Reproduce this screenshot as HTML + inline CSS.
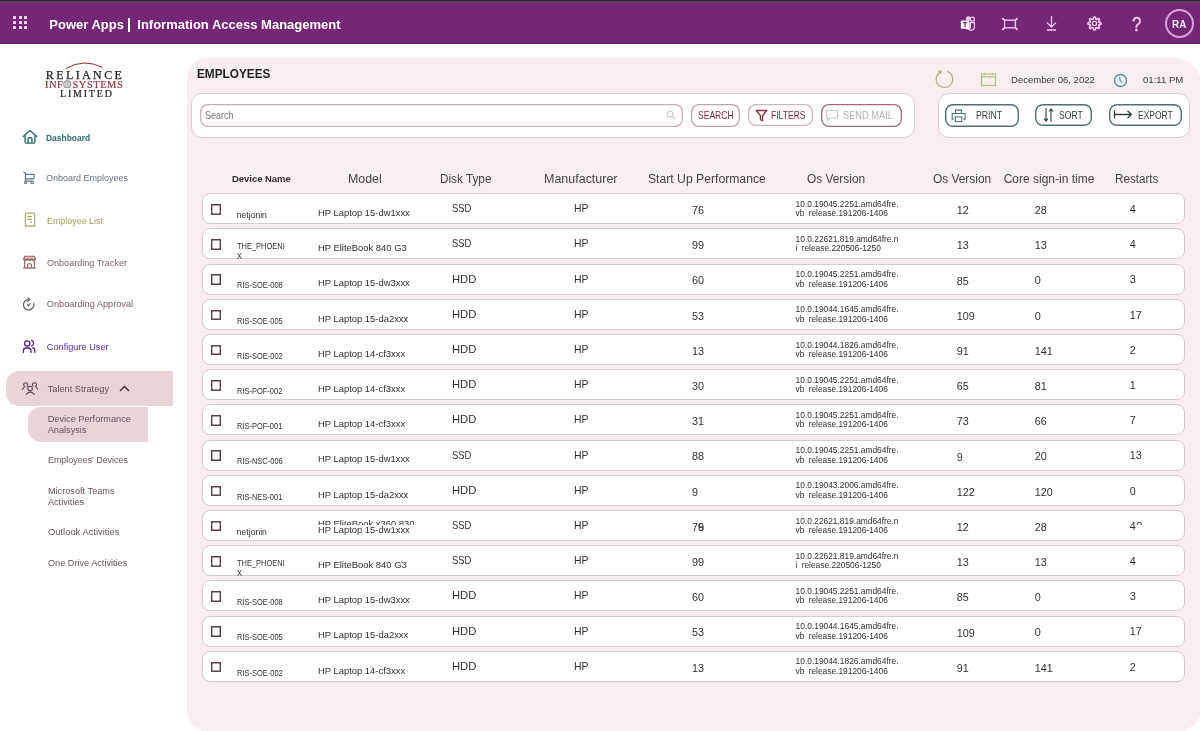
<!DOCTYPE html>
<html><head><meta charset="utf-8">
<style>
*{box-sizing:border-box;margin:0;padding:0}
html,body{width:1200px;height:731px;overflow:hidden;background:#fff}
body{position:relative;font-family:"Liberation Sans",sans-serif;color:#333}
.a{position:absolute;white-space:nowrap;line-height:1}
.s{position:absolute;overflow:visible}
</style></head><body><div style="position:absolute;left:0;top:0;width:1200px;height:731px;overflow:hidden;will-change:transform">
<div class="a" style="left:0;top:0;width:1200px;height:44px;background:linear-gradient(#2c2a30 0,#2c2a30 1.2px,#66486a 1.6px,#6a4a6c 3px,#742774 3.6px,#742774 42.6px,#5c2260 43.2px,#5c2260 43.8px,#fdf2fd 44px)"></div><div class="a" style="left:13.2px;top:16.2px;width:3px;height:3px;background:#f4d6f4;border-radius:0.6px"></div><div class="a" style="left:18.5px;top:16.2px;width:3px;height:3px;background:#f4d6f4;border-radius:0.6px"></div><div class="a" style="left:23.8px;top:16.2px;width:3px;height:3px;background:#f4d6f4;border-radius:0.6px"></div><div class="a" style="left:13.2px;top:21.3px;width:3px;height:3px;background:#f4d6f4;border-radius:0.6px"></div><div class="a" style="left:18.5px;top:21.3px;width:3px;height:3px;background:#f4d6f4;border-radius:0.6px"></div><div class="a" style="left:23.8px;top:21.3px;width:3px;height:3px;background:#f4d6f4;border-radius:0.6px"></div><div class="a" style="left:13.2px;top:26.4px;width:3px;height:3px;background:#f4d6f4;border-radius:0.6px"></div><div class="a" style="left:18.5px;top:26.4px;width:3px;height:3px;background:#f4d6f4;border-radius:0.6px"></div><div class="a" style="left:23.8px;top:26.4px;width:3px;height:3px;background:#f4d6f4;border-radius:0.6px"></div><div class="a" style="left:49.30px;top:17.80px;font-size:13px;color:#fff;font-weight:bold;">Power Apps</div>
<div class="a" style="left:128.2px;top:17.5px;width:1.5px;height:14.5px;background:#fff"></div><div class="a" style="left:137.30px;top:17.80px;font-size:13px;color:#fff;font-weight:bold;">Information Access Management</div>
<svg class="s" style="left:958.5px;top:14.8px" width="18.5" height="16.6" viewBox="0 0 20 18">
<circle cx="14.5" cy="4.5" r="2.2" fill="none" stroke="#efc8ef" stroke-width="1.3"/>
<path d="M9.5 8.2h7.2v4.6a3.6 3.6 0 0 1-7.2 0z" fill="none" stroke="#efc8ef" stroke-width="1.3"/>
<circle cx="10" cy="4" r="2.6" fill="#efc8ef"/>
<path d="M7 7.5h6v5.5a3 3 0 0 1-6 0z" fill="#efc8ef"/>
<rect x="2" y="6" width="9" height="9" rx="0.8" fill="#fff"/>
<path d="M4.3 8.2h4.4M6.5 8.2v5" stroke="#742774" stroke-width="1.3"/>
</svg><svg class="s" style="left:1001px;top:16.5px" width="18" height="14" viewBox="0 0 18 14">
<rect x="3.6" y="3.2" width="10.8" height="7.6" fill="none" stroke="#efc8ef" stroke-width="1.4"/>
<path d="M1.8 1.6l1.8 1.6M16.2 1.6l-1.8 1.6M1.8 12.4l1.8-1.6M16.2 12.4l-1.8-1.6" stroke="#efc8ef" stroke-width="1.8" stroke-linecap="round"/>
</svg><svg class="s" style="left:1045px;top:15px" width="13" height="16" viewBox="0 0 13 16">
<path d="M6.5 1v11M2 7.5l4.5 4.5 4.5-4.5M2 15h9" fill="none" stroke="#efc8ef" stroke-width="1.3"/>
</svg><svg class="s" style="left:1086.2px;top:14.7px" width="17" height="17" viewBox="0 0 17 17"><path d="M15.00 8.50 L14.98 8.75 L14.90 9.00 L14.72 9.24 L14.39 9.43 L13.89 9.57 L13.40 9.68 L13.06 9.79 L12.86 9.92 L12.74 10.06 L12.66 10.22 L12.60 10.39 L12.58 10.58 L12.63 10.81 L12.80 11.13 L13.07 11.56 L13.32 12.00 L13.42 12.38 L13.38 12.67 L13.26 12.90 L13.10 13.10 L12.90 13.26 L12.67 13.38 L12.38 13.42 L12.00 13.32 L11.56 13.07 L11.13 12.80 L10.81 12.63 L10.58 12.58 L10.39 12.60 L10.22 12.66 L10.06 12.74 L9.92 12.86 L9.79 13.06 L9.68 13.40 L9.57 13.89 L9.43 14.39 L9.24 14.72 L9.00 14.90 L8.75 14.98 L8.50 15.00 L8.25 14.98 L8.00 14.90 L7.76 14.72 L7.57 14.39 L7.43 13.89 L7.32 13.40 L7.21 13.06 L7.08 12.86 L6.94 12.74 L6.78 12.66 L6.61 12.60 L6.42 12.58 L6.19 12.63 L5.87 12.80 L5.44 13.07 L5.00 13.32 L4.62 13.42 L4.33 13.38 L4.10 13.26 L3.90 13.10 L3.74 12.90 L3.62 12.67 L3.58 12.38 L3.68 12.00 L3.93 11.56 L4.20 11.13 L4.37 10.81 L4.42 10.58 L4.40 10.39 L4.34 10.22 L4.26 10.06 L4.14 9.92 L3.94 9.79 L3.60 9.68 L3.11 9.57 L2.61 9.43 L2.28 9.24 L2.10 9.00 L2.02 8.75 L2.00 8.50 L2.02 8.25 L2.10 8.00 L2.28 7.76 L2.61 7.57 L3.11 7.43 L3.60 7.32 L3.94 7.21 L4.14 7.08 L4.26 6.94 L4.34 6.78 L4.40 6.61 L4.42 6.42 L4.37 6.19 L4.20 5.87 L3.93 5.44 L3.68 5.00 L3.58 4.62 L3.62 4.33 L3.74 4.10 L3.90 3.90 L4.10 3.74 L4.33 3.62 L4.62 3.58 L5.00 3.68 L5.44 3.93 L5.87 4.20 L6.19 4.37 L6.42 4.42 L6.61 4.40 L6.78 4.34 L6.94 4.26 L7.08 4.14 L7.21 3.94 L7.32 3.60 L7.43 3.11 L7.57 2.61 L7.76 2.28 L8.00 2.10 L8.25 2.02 L8.50 2.00 L8.75 2.02 L9.00 2.10 L9.24 2.28 L9.43 2.61 L9.57 3.11 L9.68 3.60 L9.79 3.94 L9.92 4.14 L10.06 4.26 L10.22 4.34 L10.39 4.40 L10.58 4.42 L10.81 4.37 L11.13 4.20 L11.56 3.93 L12.00 3.68 L12.38 3.58 L12.67 3.62 L12.90 3.74 L13.10 3.90 L13.26 4.10 L13.38 4.33 L13.42 4.62 L13.32 5.00 L13.07 5.44 L12.80 5.87 L12.63 6.19 L12.58 6.42 L12.60 6.61 L12.66 6.78 L12.74 6.94 L12.86 7.08 L13.06 7.21 L13.40 7.32 L13.89 7.43 L14.39 7.57 L14.72 7.76 L14.90 8.00 L14.98 8.25Z" fill="none" stroke="#efc8ef" stroke-width="1.7" stroke-linejoin="round"/><circle cx="8.5" cy="8.5" r="2.1" fill="none" stroke="#efc8ef" stroke-width="1.4"/></svg><div class="a" style="left:1131.50px;top:13.85px;font-size:20.5px;color:#efc8ef;font-weight:normal;transform:scaleX(0.82);transform-origin:0 0;-webkit-text-stroke:0.4px #efc8ef;">?</div>
<div class="a" style="left:1164.5px;top:9.3px;width:29px;height:29px;border:2.1px solid #d9a2dc;border-radius:50%"></div><div class="a" style="left:1171.80px;top:19.36px;font-size:10.8px;color:#f6e8f6;font-weight:bold;transform:scaleX(0.92);transform-origin:0 0;">RA</div>
<svg class="s" style="left:64px;top:59px" width="42" height="12" viewBox="0 0 42 12"><path d="M2 9.5Q20 -1 38.5 8.5" fill="none" stroke="#8f2a35" stroke-width="1"/></svg><div class="a" style="left:45.80px;top:68.84px;font-size:12px;color:#1e1e1e;font-weight:normal;font-family:'Liberation Serif',serif;letter-spacing:2.4px;-webkit-text-stroke:0.25px #1e1e1e;">RELIANCE</div>
<div class="a" style="left:45.00px;top:79.81px;font-size:10.5px;color:#8e3442;font-weight:normal;font-family:'Liberation Serif',serif;letter-spacing:0.5px;-webkit-text-stroke:0.2px #8e3442;">INF<svg style="display:inline-block;vertical-align:-0.5px;margin:0 0.5px 0 0" width="8.6" height="8.6" viewBox="0 0 10 10"><circle cx="5" cy="5" r="4.4" fill="#fff" stroke="#666" stroke-width="0.9"/><path d="M5 0.7v8.6M0.7 5h8.6M1.6 3h6.8M1.6 7h6.8" stroke="#888" stroke-width="0.5"/><ellipse cx="5" cy="5" rx="2.1" ry="4.3" fill="none" stroke="#888" stroke-width="0.5"/></svg>SYSTEMS</div>
<div class="a" style="left:60.00px;top:88.94px;font-size:10px;color:#1e1e1e;font-weight:normal;font-family:'Liberation Serif',serif;letter-spacing:1.8px;-webkit-text-stroke:0.2px #1e1e1e;">LIMITED</div>
<svg class="s" style="left:18px;top:125px" width="24" height="24" viewBox="0 0 24 24">
<path d="M5.3 11.5L12 5.4l6.7 6.1M7.1 10.1v6.7a1.3 1.3 0 0 0 1.3 1.3h7.2a1.3 1.3 0 0 0 1.3-1.3v-6.7" fill="none" stroke="#2a6b6a" stroke-width="1.4" stroke-linejoin="round" stroke-linecap="round"/>
<path d="M10.1 18v-4.3a0.9 0.9 0 0 1 0.9-0.9h2a0.9 0.9 0 0 1 0.9 0.9v4.3" fill="none" stroke="#2a6b6a" stroke-width="1.4"/>
</svg><div class="a" style="left:46.00px;top:134.20px;font-size:9.1px;color:#276f6d;font-weight:bold;transform:scaleX(0.93);transform-origin:0 0;">Dashboard</div>
<svg class="s" style="left:18px;top:165px" width="24" height="25" viewBox="0 0 24 25">
<path d="M5.9 7.2l1.5 1.1V16h7.2M7.4 9.3h8.6v4.5H7.4" fill="none" stroke="#6b7780" stroke-width="1.25" stroke-linejoin="round" stroke-linecap="round"/>
<circle cx="7.5" cy="17.6" r="1.15" fill="none" stroke="#6b7780" stroke-width="1.1"/><ellipse cx="14.2" cy="17.6" rx="1.5" ry="1.1" fill="none" stroke="#6b7780" stroke-width="1.1"/>
</svg><div class="a" style="left:46.00px;top:174.41px;font-size:9.2px;color:#67727b;font-weight:normal;transform:scaleX(0.98);transform-origin:0 0;">Onboard Employees</div>
<svg class="s" style="left:18px;top:208px" width="24" height="24" viewBox="0 0 24 24">
<path d="M7.3 18.4V6.5a1.3 1.3 0 0 1 1.3-1.3h6.8a1.3 1.3 0 0 1 1.3 1.3v11.9l-1.5-0.9-1.5 0.9-1.5-0.9-1.5 0.9-1.5-0.9z" fill="none" stroke="#b2b072" stroke-width="1.2" stroke-linejoin="round"/>
<path d="M9.4 8.6h4.4M9.4 11.4h4.4M12.1 14.3h1.7" stroke="#a9a568" stroke-width="1.15"/>
</svg><div class="a" style="left:46.80px;top:217.01px;font-size:9.2px;color:#a19e60;font-weight:normal;transform:scaleX(0.97);transform-origin:0 0;">Employee List</div>
<svg class="s" style="left:18px;top:250px" width="24" height="24" viewBox="0 0 24 24">
<path d="M6.6 6.2h9.8l1 3H5.6z" fill="#ebc3bf" stroke="#8e6260" stroke-width="1.1" stroke-linejoin="round"/>
<path d="M5.6 9.2q1.95 2.6 3.9 0q1.95 2.6 3.9 0q1.95 2.6 3.9 0" fill="none" stroke="#8e6260" stroke-width="1.1"/>
<path d="M6.7 10.6v7.2M16.3 10.6v7.2M9.6 17.8v-3.1a1 1 0 0 1 1-1h1.8a1 1 0 0 1 1 1v3.1" fill="none" stroke="#8e6260" stroke-width="1.15"/>
<path d="M5.2 18h12.6" stroke="#8e6260" stroke-width="1.3"/>
</svg><div class="a" style="left:46.80px;top:259.01px;font-size:9.2px;color:#7c5f61;font-weight:normal;transform:scaleX(0.985);transform-origin:0 0;">Onboarding Tracker</div>
<svg class="s" style="left:18px;top:292px" width="24" height="24" viewBox="0 0 24 24">
<path d="M10.3 7.6A5.2 5.2 0 1 0 15.7 11.6" fill="none" stroke="#6a5a62" stroke-width="1.2" stroke-linecap="round"/>
<path d="M10 5.9l1.8 1.7-1.8 1.7" fill="none" stroke="#6a5a62" stroke-width="1.2" stroke-linecap="round" stroke-linejoin="round"/>
<path d="M9.3 12.5l1.2 1.1 1.9-2.1" fill="none" stroke="#6a5a62" stroke-width="1.1" stroke-linecap="round" stroke-linejoin="round"/>
</svg><div class="a" style="left:46.80px;top:300.41px;font-size:9.2px;color:#705e67;font-weight:normal;">Onboarding Approval</div>
<svg class="s" style="left:18px;top:334px" width="24" height="24" viewBox="0 0 24 24">
<circle cx="9.2" cy="9.4" r="2.6" fill="none" stroke="#4f2486" stroke-width="1.3"/>
<path d="M5.4 18.4v-1.6a2.8 2.8 0 0 1 2.8-2.8h2a2.8 2.8 0 0 1 2.8 2.8v1.6M13.6 6.5a2.8 2.8 0 0 1 0 5.4M14.5 13.9a2.6 2.6 0 0 1 2.3 2.6v1.9" fill="none" stroke="#4f2486" stroke-width="1.3" stroke-linecap="round"/>
</svg><div class="a" style="left:46.80px;top:343.01px;font-size:9.2px;color:#5b2c98;font-weight:normal;">Configure User</div>
<div class="a" style="left:6px;top:371.3px;width:166.5px;height:34.4px;background:#e8d5d8;border-radius:13px 0 0 13px"></div><svg class="s" style="left:18px;top:376px" width="24" height="24" viewBox="0 0 24 24">
<circle cx="12.1" cy="12.6" r="2.3" fill="none" stroke="#5e4c54" stroke-width="1.1"/>
<path d="M8.3 18.3Q12.2 14 16.2 18.3M9.1 10.2A2 2 0 1 0 6.7 10.5L4.3 13.4M15.1 10.2A2 2 0 1 1 17.5 10.5L19.8 13.2" fill="none" stroke="#5e4c54" stroke-width="1.1" stroke-linecap="round"/>
</svg><div class="a" style="left:47.70px;top:385.21px;font-size:9.2px;color:#615058;font-weight:normal;">Talent Strategy</div>
<svg class="s" style="left:119px;top:385px" width="11" height="7" viewBox="0 0 11 7"><path d="M1 6L5.5 1.5 10 6" fill="none" stroke="#3d3035" stroke-width="1.4"/></svg><div class="a" style="left:27.7px;top:407.2px;width:120.8px;height:34.5px;background:#e8d5d8;border-radius:13px 0 0 13px"></div><div class="a" style="left:47.70px;top:415.21px;font-size:9.2px;color:#66505e;font-weight:normal;">Device Performance</div>
<div class="a" style="left:47.70px;top:425.71px;font-size:9.2px;color:#66505e;font-weight:normal;">Analsysis</div>
<div class="a" style="left:47.90px;top:456.41px;font-size:9.2px;color:#66505e;font-weight:normal;transform:scaleX(0.97);transform-origin:0 0;">Employees’ Devices</div>
<div class="a" style="left:47.90px;top:486.81px;font-size:9.2px;color:#66505e;font-weight:normal;">Microsoft Teams</div>
<div class="a" style="left:47.90px;top:497.71px;font-size:9.2px;color:#66505e;font-weight:normal;">Activities</div>
<div class="a" style="left:47.90px;top:528.31px;font-size:9.2px;color:#66505e;font-weight:normal;transform:scaleX(1.02);transform-origin:0 0;">Outlook Activities</div>
<div class="a" style="left:47.90px;top:558.91px;font-size:9.2px;color:#66505e;font-weight:normal;transform:scaleX(0.995);transform-origin:0 0;">One Drive Activities</div>
<div class="a" style="left:187px;top:58px;width:1015px;height:675px;border-radius:20px 28px 28px 25px;background:#f8eeef"></div><div class="a" style="left:197.00px;top:67.43px;font-size:13.2px;color:#1f1f24;font-weight:bold;transform:scaleX(0.895);transform-origin:0 0;">EMPLOYEES</div>
<div class="a" style="left:191.2px;top:93px;width:724.3px;height:44.5px;background:#fff;border:1px solid #dccdd0;border-radius:11px"></div><div class="a" style="left:199.8px;top:103.5px;width:483px;height:23px;background:#fff;box-shadow:inset 0 0 0 1.25px #c6aeb3;border-radius:8px"></div><div class="a" style="left:205.00px;top:111.20px;font-size:10.4px;color:#7a7a7a;font-weight:normal;transform:scaleX(0.87);transform-origin:0 0;">Search</div>
<svg class="s" style="left:666px;top:110px" width="10" height="10" viewBox="0 0 10 10"><circle cx="4" cy="4" r="2.8" fill="none" stroke="#c8c8c8" stroke-width="1.2"/><path d="M6 6l3 3" stroke="#c8c8c8" stroke-width="1.3"/></svg><div class="a" style="left:691px;top:103.5px;width:49px;height:23px;background:#fff;box-shadow:inset 0 0 0 1.25px #bfa3a8;border-radius:8px"></div><div class="a" style="left:698.00px;top:111.28px;font-size:10.3px;color:#7b2c3c;font-weight:normal;transform:scaleX(0.83);transform-origin:0 0;">SEARCH</div>
<div class="a" style="left:748.3px;top:103.7px;width:65px;height:22.8px;background:#fff;box-shadow:inset 0 0 0 1.25px #d0b6bb;border-radius:8px"></div><svg class="s" style="left:755px;top:109px" width="13" height="13" viewBox="0 0 13 13"><path d="M1.3 1.5h10.4L7.6 6.5v5.3L5.4 10.6V6.5z" fill="none" stroke="#8a3040" stroke-width="1.3" stroke-linejoin="round"/></svg><div class="a" style="left:770.50px;top:111.28px;font-size:10.3px;color:#7b2c3c;font-weight:normal;transform:scaleX(0.83);transform-origin:0 0;">FILTERS</div>
<div class="a" style="left:821.2px;top:103.5px;width:80.6px;height:23px;background:#fff;box-shadow:inset 0 0 0 1.35px #a56a74;border-radius:8px"></div><svg class="s" style="left:825px;top:109px" width="14" height="13" viewBox="0 0 14 13"><path d="M1.5 1.5h11v7.5H5.5L2.5 11.5V9h-1z" fill="none" stroke="#c8c8c8" stroke-width="1.2" stroke-linejoin="round"/></svg><div class="a" style="left:843.30px;top:111.28px;font-size:10.3px;color:#b3b3b3;font-weight:normal;transform:scaleX(0.9);transform-origin:0 0;">SEND MAIL</div>
<svg class="s" style="left:934px;top:69px" width="21" height="21" viewBox="0 0 21 21">
<path d="M7.2 2.6A8.3 8.3 0 1 0 13.2 2.4" fill="none" stroke="#a9b47f" stroke-width="1.15"/>
<path d="M4.2 1.6L7.4 2.6 5.8 5.6" fill="none" stroke="#a9b47f" stroke-width="1.15" stroke-linejoin="round"/>
</svg><svg class="s" style="left:980px;top:72px" width="17" height="15" viewBox="0 0 17 15">
<rect x="1.5" y="2" width="14" height="11.5" fill="none" stroke="#a9c27e" stroke-width="1.15"/>
<path d="M1.5 4.8h14M4.5 1v2.2M12.5 1v2.2" stroke="#a9c27e" stroke-width="1.15"/>
</svg><div class="a" style="left:1011.00px;top:75.39px;font-size:9.7px;color:#383838;font-weight:normal;transform:scaleX(0.985);transform-origin:0 0;">December 06, 2022</div>
<svg class="s" style="left:1113px;top:72.5px" width="15" height="15" viewBox="0 0 15 15">
<circle cx="7.5" cy="7.5" r="6" fill="none" stroke="#4d8bb8" stroke-width="1.4"/>
<path d="M6.6 3.8l0.6 4 2 2" fill="none" stroke="#4d8bb8" stroke-width="1.1"/>
</svg><div class="a" style="left:1142.50px;top:75.39px;font-size:9.7px;color:#383838;font-weight:normal;transform:scaleX(0.99);transform-origin:0 0;">01:11 PM</div>
<div class="a" style="left:937.6px;top:93.2px;width:252.4px;height:44.5px;background:#fff;border:1px solid #dfcdd0;border-radius:11px"></div><div class="a" style="left:945.2px;top:103.5px;width:73.4px;height:23px;background:#fff;box-shadow:inset 0 0 0 1.4px #4f6f71;border-radius:8px"></div><svg class="s" style="left:951px;top:108.6px" width="15.4" height="13.6" viewBox="0 0 17 15">
<path d="M5 5V1.2h6.5V5M3 11.2H1.3V5h14.3v6.2H13.5" fill="none" stroke="#4f6f71" stroke-width="1.2"/>
<rect x="4.8" y="8.7" width="7" height="5.2" fill="none" stroke="#4f6f71" stroke-width="1.2"/>
</svg><div class="a" style="left:975.50px;top:111.05px;font-size:10.1px;color:#2e3d3e;font-weight:normal;transform:scaleX(0.86);transform-origin:0 0;">PRINT</div>
<div class="a" style="left:1035.4px;top:103.7px;width:57px;height:22.8px;background:#fff;box-shadow:inset 0 0 0 1.4px #4f6f71;border-radius:8px"></div><svg class="s" style="left:1043px;top:107px" width="11" height="16" viewBox="0 0 11 16">
<path d="M3 1v13M1 11.5l2 2.5 2-2.5M8 15V2M6 4.5L8 2l2 2.5" fill="none" stroke="#2f3f40" stroke-width="1.1"/>
</svg><div class="a" style="left:1059.00px;top:111.05px;font-size:10.1px;color:#2e3d3e;font-weight:normal;transform:scaleX(0.85);transform-origin:0 0;">SORT</div>
<div class="a" style="left:1109px;top:103.7px;width:72.8px;height:22.8px;background:#fff;box-shadow:inset 0 0 0 1.4px #4f6f71;border-radius:8px"></div><svg class="s" style="left:1113px;top:109px" width="20" height="11" viewBox="0 0 20 11">
<path d="M1.5 1.5v8M1.5 5.5h17M14.5 1.8l3.9 3.7-3.9 3.7" fill="none" stroke="#2f3f40" stroke-width="1.3"/>
</svg><div class="a" style="left:1137.60px;top:111.05px;font-size:10.1px;color:#2e3d3e;font-weight:normal;transform:scaleX(0.84);transform-origin:0 0;">EXPORT</div>
<div class="a" style="left:232.00px;top:173.82px;font-size:9.9px;color:#2e2e2e;font-weight:bold;transform:scaleX(0.955);transform-origin:0 0;">Device Name</div>
<div class="a" style="left:348.30px;top:173.14px;font-size:12px;color:#444444;font-weight:normal;transform:scaleX(1.03);transform-origin:0 0;">Model</div>
<div class="a" style="left:439.70px;top:173.14px;font-size:12px;color:#444444;font-weight:normal;transform:scaleX(0.98);transform-origin:0 0;">Disk Type</div>
<div class="a" style="left:543.50px;top:173.14px;font-size:12px;color:#444444;font-weight:normal;transform:scaleX(1.04);transform-origin:0 0;">Manufacturer</div>
<div class="a" style="left:647.70px;top:173.14px;font-size:12px;color:#444444;font-weight:normal;transform:scaleX(1.015);transform-origin:0 0;">Start Up Performance</div>
<div class="a" style="left:806.70px;top:173.14px;font-size:12px;color:#444444;font-weight:normal;transform:scaleX(0.99);transform-origin:0 0;">Os Version</div>
<div class="a" style="left:932.50px;top:173.14px;font-size:12px;color:#444444;font-weight:normal;transform:scaleX(0.99);transform-origin:0 0;">Os Version</div>
<div class="a" style="left:1003.70px;top:173.14px;font-size:12px;color:#444444;font-weight:normal;">Core sign-in time</div>
<div class="a" style="left:1114.70px;top:173.14px;font-size:12px;color:#444444;font-weight:normal;transform:scaleX(0.97);transform-origin:0 0;">Restarts</div>
<div class="a" style="left:202.2px;top:193.20px;width:982.6px;height:31px;background:#fff;border:1px solid #d5cacd;border-radius:8px"></div><div class="a" style="left:210.5px;top:204.00px;width:10.6px;height:10.6px;box-shadow:inset 0 0 0 1.4px #5c3c46"></div><div class="a" style="left:236.80px;top:210.92px;font-size:8.6px;color:#2f2f2f;font-weight:normal;">netjonin</div>
<div class="a" style="left:317.50px;top:207.97px;font-size:9.6px;color:#2f2f2f;font-weight:normal;transform:scaleX(0.98);transform-origin:0 0;">HP Laptop 15-dw1xxx</div>
<div class="a" style="left:452.00px;top:203.23px;font-size:10.6px;color:#2f2f2f;font-weight:normal;transform:scaleX(0.89);transform-origin:0 0;">SSD</div>
<div class="a" style="left:573.80px;top:203.23px;font-size:10.6px;color:#2f2f2f;font-weight:normal;transform:scaleX(0.98);transform-origin:0 0;">HP</div>
<div class="a" style="left:692.00px;top:205.06px;font-size:10.8px;color:#2f2f2f;font-weight:normal;">76</div>
<div class="a" style="left:795.60px;top:199.89px;font-size:8.4px;color:#2f2f2f;font-weight:normal;">10.0.19045.2251.amd64fre.</div>
<div class="a" style="left:795.60px;top:209.19px;font-size:8.4px;color:#2f2f2f;font-weight:normal;">vb<span style="margin-left:4.2px"></span>release.191206-1406</div>
<div class="a" style="left:956.70px;top:205.26px;font-size:10.8px;color:#2f2f2f;font-weight:normal;">12</div>
<div class="a" style="left:1034.70px;top:204.96px;font-size:10.8px;color:#2f2f2f;font-weight:normal;">28</div>
<div class="a" style="left:1129.70px;top:204.06px;font-size:10.8px;color:#2f2f2f;font-weight:normal;">4</div>
<div class="a" style="left:202.2px;top:228.40px;width:982.6px;height:31px;background:#fff;border:1px solid #d5cacd;border-radius:8px"></div><div class="a" style="left:210.5px;top:239.20px;width:10.6px;height:10.6px;box-shadow:inset 0 0 0 1.4px #5c3c46"></div><div class="a" style="left:236.80px;top:242.02px;font-size:8.6px;color:#2f2f2f;font-weight:normal;transform:scaleX(0.87);transform-origin:0 0;">THE_PHOENI</div>
<div class="a" style="left:236.80px;top:252.02px;font-size:8.6px;color:#2f2f2f;font-weight:normal;transform:scaleX(0.87);transform-origin:0 0;">X</div>
<div class="a" style="left:317.50px;top:243.17px;font-size:9.6px;color:#2f2f2f;font-weight:normal;transform:scaleX(0.98);transform-origin:0 0;">HP EliteBook 840 G3</div>
<div class="a" style="left:452.00px;top:238.43px;font-size:10.6px;color:#2f2f2f;font-weight:normal;transform:scaleX(0.89);transform-origin:0 0;">SSD</div>
<div class="a" style="left:573.80px;top:238.43px;font-size:10.6px;color:#2f2f2f;font-weight:normal;transform:scaleX(0.98);transform-origin:0 0;">HP</div>
<div class="a" style="left:692.00px;top:240.26px;font-size:10.8px;color:#2f2f2f;font-weight:normal;">99</div>
<div class="a" style="left:795.60px;top:235.09px;font-size:8.4px;color:#2f2f2f;font-weight:normal;">10.0.22621.819.amd64fre.n</div>
<div class="a" style="left:795.60px;top:244.39px;font-size:8.4px;color:#2f2f2f;font-weight:normal;">i<span style="margin-left:4.2px"></span>release.220506-1250</div>
<div class="a" style="left:956.70px;top:240.46px;font-size:10.8px;color:#2f2f2f;font-weight:normal;">13</div>
<div class="a" style="left:1034.70px;top:240.16px;font-size:10.8px;color:#2f2f2f;font-weight:normal;">13</div>
<div class="a" style="left:1129.70px;top:239.26px;font-size:10.8px;color:#2f2f2f;font-weight:normal;">4</div>
<div class="a" style="left:202.2px;top:263.60px;width:982.6px;height:31px;background:#fff;border:1px solid #d5cacd;border-radius:8px"></div><div class="a" style="left:210.5px;top:274.40px;width:10.6px;height:10.6px;box-shadow:inset 0 0 0 1.4px #5c3c46"></div><div class="a" style="left:236.80px;top:281.32px;font-size:8.6px;color:#2f2f2f;font-weight:normal;transform:scaleX(0.87);transform-origin:0 0;">RIS-SOE-008</div>
<div class="a" style="left:317.50px;top:278.37px;font-size:9.6px;color:#2f2f2f;font-weight:normal;transform:scaleX(0.98);transform-origin:0 0;">HP Laptop 15-dw3xxx</div>
<div class="a" style="left:452.00px;top:273.63px;font-size:10.6px;color:#2f2f2f;font-weight:normal;transform:scaleX(1.06);transform-origin:0 0;">HDD</div>
<div class="a" style="left:573.80px;top:273.63px;font-size:10.6px;color:#2f2f2f;font-weight:normal;transform:scaleX(0.98);transform-origin:0 0;">HP</div>
<div class="a" style="left:692.00px;top:275.46px;font-size:10.8px;color:#2f2f2f;font-weight:normal;">60</div>
<div class="a" style="left:795.60px;top:270.29px;font-size:8.4px;color:#2f2f2f;font-weight:normal;">10.0.19045.2251.amd64fre.</div>
<div class="a" style="left:795.60px;top:279.59px;font-size:8.4px;color:#2f2f2f;font-weight:normal;">vb<span style="margin-left:4.2px"></span>release.191206-1406</div>
<div class="a" style="left:956.70px;top:275.66px;font-size:10.8px;color:#2f2f2f;font-weight:normal;">85</div>
<div class="a" style="left:1034.70px;top:275.36px;font-size:10.8px;color:#2f2f2f;font-weight:normal;">0</div>
<div class="a" style="left:1129.70px;top:274.46px;font-size:10.8px;color:#2f2f2f;font-weight:normal;">3</div>
<div class="a" style="left:202.2px;top:298.80px;width:982.6px;height:31px;background:#fff;border:1px solid #d5cacd;border-radius:8px"></div><div class="a" style="left:210.5px;top:309.60px;width:10.6px;height:10.6px;box-shadow:inset 0 0 0 1.4px #5c3c46"></div><div class="a" style="left:236.80px;top:316.52px;font-size:8.6px;color:#2f2f2f;font-weight:normal;transform:scaleX(0.87);transform-origin:0 0;">RIS-SOE-005</div>
<div class="a" style="left:317.50px;top:313.57px;font-size:9.6px;color:#2f2f2f;font-weight:normal;transform:scaleX(0.98);transform-origin:0 0;">HP Laptop 15-da2xxx</div>
<div class="a" style="left:452.00px;top:308.83px;font-size:10.6px;color:#2f2f2f;font-weight:normal;transform:scaleX(1.06);transform-origin:0 0;">HDD</div>
<div class="a" style="left:573.80px;top:308.83px;font-size:10.6px;color:#2f2f2f;font-weight:normal;transform:scaleX(0.98);transform-origin:0 0;">HP</div>
<div class="a" style="left:692.00px;top:310.66px;font-size:10.8px;color:#2f2f2f;font-weight:normal;">53</div>
<div class="a" style="left:795.60px;top:305.49px;font-size:8.4px;color:#2f2f2f;font-weight:normal;">10.0.19044.1645.amd64fre.</div>
<div class="a" style="left:795.60px;top:314.79px;font-size:8.4px;color:#2f2f2f;font-weight:normal;">vb<span style="margin-left:4.2px"></span>release.191206-1406</div>
<div class="a" style="left:956.70px;top:310.86px;font-size:10.8px;color:#2f2f2f;font-weight:normal;">109</div>
<div class="a" style="left:1034.70px;top:310.56px;font-size:10.8px;color:#2f2f2f;font-weight:normal;">0</div>
<div class="a" style="left:1129.70px;top:309.66px;font-size:10.8px;color:#2f2f2f;font-weight:normal;">17</div>
<div class="a" style="left:202.2px;top:334.00px;width:982.6px;height:31px;background:#fff;border:1px solid #d5cacd;border-radius:8px"></div><div class="a" style="left:210.5px;top:344.80px;width:10.6px;height:10.6px;box-shadow:inset 0 0 0 1.4px #5c3c46"></div><div class="a" style="left:236.80px;top:351.72px;font-size:8.6px;color:#2f2f2f;font-weight:normal;transform:scaleX(0.87);transform-origin:0 0;">RIS-SOE-002</div>
<div class="a" style="left:317.50px;top:348.77px;font-size:9.6px;color:#2f2f2f;font-weight:normal;transform:scaleX(0.98);transform-origin:0 0;">HP Laptop 14-cf3xxx</div>
<div class="a" style="left:452.00px;top:344.03px;font-size:10.6px;color:#2f2f2f;font-weight:normal;transform:scaleX(1.06);transform-origin:0 0;">HDD</div>
<div class="a" style="left:573.80px;top:344.03px;font-size:10.6px;color:#2f2f2f;font-weight:normal;transform:scaleX(0.98);transform-origin:0 0;">HP</div>
<div class="a" style="left:692.00px;top:345.86px;font-size:10.8px;color:#2f2f2f;font-weight:normal;">13</div>
<div class="a" style="left:795.60px;top:340.69px;font-size:8.4px;color:#2f2f2f;font-weight:normal;">10.0.19044.1826.amd64fre.</div>
<div class="a" style="left:795.60px;top:349.99px;font-size:8.4px;color:#2f2f2f;font-weight:normal;">vb<span style="margin-left:4.2px"></span>release.191206-1406</div>
<div class="a" style="left:956.70px;top:346.06px;font-size:10.8px;color:#2f2f2f;font-weight:normal;">91</div>
<div class="a" style="left:1034.70px;top:345.76px;font-size:10.8px;color:#2f2f2f;font-weight:normal;">141</div>
<div class="a" style="left:1129.70px;top:344.86px;font-size:10.8px;color:#2f2f2f;font-weight:normal;">2</div>
<div class="a" style="left:202.2px;top:369.20px;width:982.6px;height:31px;background:#fff;border:1px solid #d5cacd;border-radius:8px"></div><div class="a" style="left:210.5px;top:380.00px;width:10.6px;height:10.6px;box-shadow:inset 0 0 0 1.4px #5c3c46"></div><div class="a" style="left:236.80px;top:386.92px;font-size:8.6px;color:#2f2f2f;font-weight:normal;transform:scaleX(0.87);transform-origin:0 0;">RIS-POF-002</div>
<div class="a" style="left:317.50px;top:383.97px;font-size:9.6px;color:#2f2f2f;font-weight:normal;transform:scaleX(0.98);transform-origin:0 0;">HP Laptop 14-cf3xxx</div>
<div class="a" style="left:452.00px;top:379.23px;font-size:10.6px;color:#2f2f2f;font-weight:normal;transform:scaleX(1.06);transform-origin:0 0;">HDD</div>
<div class="a" style="left:573.80px;top:379.23px;font-size:10.6px;color:#2f2f2f;font-weight:normal;transform:scaleX(0.98);transform-origin:0 0;">HP</div>
<div class="a" style="left:692.00px;top:381.06px;font-size:10.8px;color:#2f2f2f;font-weight:normal;">30</div>
<div class="a" style="left:795.60px;top:375.89px;font-size:8.4px;color:#2f2f2f;font-weight:normal;">10.0.19045.2251.amd64fre.</div>
<div class="a" style="left:795.60px;top:385.19px;font-size:8.4px;color:#2f2f2f;font-weight:normal;">vb<span style="margin-left:4.2px"></span>release.191206-1406</div>
<div class="a" style="left:956.70px;top:381.26px;font-size:10.8px;color:#2f2f2f;font-weight:normal;">65</div>
<div class="a" style="left:1034.70px;top:380.96px;font-size:10.8px;color:#2f2f2f;font-weight:normal;">81</div>
<div class="a" style="left:1129.70px;top:380.06px;font-size:10.8px;color:#2f2f2f;font-weight:normal;">1</div>
<div class="a" style="left:202.2px;top:404.40px;width:982.6px;height:31px;background:#fff;border:1px solid #d5cacd;border-radius:8px"></div><div class="a" style="left:210.5px;top:415.20px;width:10.6px;height:10.6px;box-shadow:inset 0 0 0 1.4px #5c3c46"></div><div class="a" style="left:236.80px;top:422.12px;font-size:8.6px;color:#2f2f2f;font-weight:normal;transform:scaleX(0.87);transform-origin:0 0;">RIS-POF-001</div>
<div class="a" style="left:317.50px;top:419.17px;font-size:9.6px;color:#2f2f2f;font-weight:normal;transform:scaleX(0.98);transform-origin:0 0;">HP Laptop 14-cf3xxx</div>
<div class="a" style="left:452.00px;top:414.43px;font-size:10.6px;color:#2f2f2f;font-weight:normal;transform:scaleX(1.06);transform-origin:0 0;">HDD</div>
<div class="a" style="left:573.80px;top:414.43px;font-size:10.6px;color:#2f2f2f;font-weight:normal;transform:scaleX(0.98);transform-origin:0 0;">HP</div>
<div class="a" style="left:692.00px;top:416.26px;font-size:10.8px;color:#2f2f2f;font-weight:normal;">31</div>
<div class="a" style="left:795.60px;top:411.09px;font-size:8.4px;color:#2f2f2f;font-weight:normal;">10.0.19045.2251.amd64fre.</div>
<div class="a" style="left:795.60px;top:420.39px;font-size:8.4px;color:#2f2f2f;font-weight:normal;">vb<span style="margin-left:4.2px"></span>release.191206-1406</div>
<div class="a" style="left:956.70px;top:416.46px;font-size:10.8px;color:#2f2f2f;font-weight:normal;">73</div>
<div class="a" style="left:1034.70px;top:416.16px;font-size:10.8px;color:#2f2f2f;font-weight:normal;">66</div>
<div class="a" style="left:1129.70px;top:415.26px;font-size:10.8px;color:#2f2f2f;font-weight:normal;">7</div>
<div class="a" style="left:202.2px;top:439.60px;width:982.6px;height:31px;background:#fff;border:1px solid #d5cacd;border-radius:8px"></div><div class="a" style="left:210.5px;top:450.40px;width:10.6px;height:10.6px;box-shadow:inset 0 0 0 1.4px #5c3c46"></div><div class="a" style="left:236.80px;top:457.32px;font-size:8.6px;color:#2f2f2f;font-weight:normal;transform:scaleX(0.87);transform-origin:0 0;">RIS-NSC-006</div>
<div class="a" style="left:317.50px;top:454.37px;font-size:9.6px;color:#2f2f2f;font-weight:normal;transform:scaleX(0.98);transform-origin:0 0;">HP Laptop 15-dw1xxx</div>
<div class="a" style="left:452.00px;top:449.63px;font-size:10.6px;color:#2f2f2f;font-weight:normal;transform:scaleX(0.89);transform-origin:0 0;">SSD</div>
<div class="a" style="left:573.80px;top:449.63px;font-size:10.6px;color:#2f2f2f;font-weight:normal;transform:scaleX(0.98);transform-origin:0 0;">HP</div>
<div class="a" style="left:692.00px;top:451.46px;font-size:10.8px;color:#2f2f2f;font-weight:normal;">88</div>
<div class="a" style="left:795.60px;top:446.29px;font-size:8.4px;color:#2f2f2f;font-weight:normal;">10.0.19045.2251.amd64fre.</div>
<div class="a" style="left:795.60px;top:455.59px;font-size:8.4px;color:#2f2f2f;font-weight:normal;">vb<span style="margin-left:4.2px"></span>release.191206-1406</div>
<div class="a" style="left:956.70px;top:451.66px;font-size:10.8px;color:#2f2f2f;font-weight:normal;">9</div>
<div class="a" style="left:1034.70px;top:451.36px;font-size:10.8px;color:#2f2f2f;font-weight:normal;">20</div>
<div class="a" style="left:1129.70px;top:450.46px;font-size:10.8px;color:#2f2f2f;font-weight:normal;">13</div>
<div class="a" style="left:202.2px;top:474.80px;width:982.6px;height:31px;background:#fff;border:1px solid #d5cacd;border-radius:8px"></div><div class="a" style="left:210.5px;top:485.60px;width:10.6px;height:10.6px;box-shadow:inset 0 0 0 1.4px #5c3c46"></div><div class="a" style="left:236.80px;top:492.52px;font-size:8.6px;color:#2f2f2f;font-weight:normal;transform:scaleX(0.87);transform-origin:0 0;">RIS-NES-001</div>
<div class="a" style="left:317.50px;top:489.57px;font-size:9.6px;color:#2f2f2f;font-weight:normal;transform:scaleX(0.98);transform-origin:0 0;">HP Laptop 15-da2xxx</div>
<div class="a" style="left:452.00px;top:484.83px;font-size:10.6px;color:#2f2f2f;font-weight:normal;transform:scaleX(1.06);transform-origin:0 0;">HDD</div>
<div class="a" style="left:573.80px;top:484.83px;font-size:10.6px;color:#2f2f2f;font-weight:normal;transform:scaleX(0.98);transform-origin:0 0;">HP</div>
<div class="a" style="left:692.00px;top:486.66px;font-size:10.8px;color:#2f2f2f;font-weight:normal;">9</div>
<div class="a" style="left:795.60px;top:481.49px;font-size:8.4px;color:#2f2f2f;font-weight:normal;">10.0.19043.2006.amd64fre.</div>
<div class="a" style="left:795.60px;top:490.79px;font-size:8.4px;color:#2f2f2f;font-weight:normal;">vb<span style="margin-left:4.2px"></span>release.191206-1406</div>
<div class="a" style="left:956.70px;top:486.86px;font-size:10.8px;color:#2f2f2f;font-weight:normal;">122</div>
<div class="a" style="left:1034.70px;top:486.56px;font-size:10.8px;color:#2f2f2f;font-weight:normal;">120</div>
<div class="a" style="left:1129.70px;top:485.66px;font-size:10.8px;color:#2f2f2f;font-weight:normal;">0</div>
<div class="a" style="left:202.2px;top:510.00px;width:982.6px;height:31px;background:#fff;border:1px solid #d5cacd;border-radius:8px"></div><div class="a" style="left:210.5px;top:520.80px;width:10.6px;height:10.6px;box-shadow:inset 0 0 0 1.4px #5c3c46"></div><div class="a" style="left:236.80px;top:527.72px;font-size:8.6px;color:#2f2f2f;font-weight:normal;">netjonin</div>
<div class="a" style="left:317.50px;top:519.37px;font-size:9.6px;color:#2f2f2f;font-weight:normal;transform:scaleX(0.98);transform-origin:0 0;clip-path:inset(0 0 40% 0);">HP EliteBook x360 830</div>
<div class="a" style="left:317.50px;top:524.87px;font-size:9.6px;color:#2f2f2f;font-weight:normal;transform:scaleX(0.98);transform-origin:0 0;">HP Laptop 15-dw1xxx</div>
<div class="a" style="left:452.00px;top:520.03px;font-size:10.6px;color:#2f2f2f;font-weight:normal;transform:scaleX(0.89);transform-origin:0 0;">SSD</div>
<div class="a" style="left:573.80px;top:520.03px;font-size:10.6px;color:#2f2f2f;font-weight:normal;transform:scaleX(0.98);transform-origin:0 0;">HP</div>
<div class="a" style="left:692.00px;top:521.86px;font-size:10.8px;color:#2f2f2f;font-weight:normal;">76</div>
<div class="a" style="left:795.60px;top:516.69px;font-size:8.4px;color:#2f2f2f;font-weight:normal;">10.0.22621.819.amd64fre.n</div>
<div class="a" style="left:795.60px;top:525.99px;font-size:8.4px;color:#2f2f2f;font-weight:normal;">vb<span style="margin-left:4.2px"></span>release.191206-1406</div>
<div class="a" style="left:956.70px;top:522.06px;font-size:10.8px;color:#2f2f2f;font-weight:normal;">12</div>
<div class="a" style="left:1034.70px;top:521.76px;font-size:10.8px;color:#2f2f2f;font-weight:normal;">28</div>
<div class="a" style="left:1129.70px;top:520.86px;font-size:10.8px;color:#2f2f2f;font-weight:normal;">4</div>
<div class="a" style="left:692.00px;top:521.86px;font-size:10.8px;color:#2f2f2f;font-weight:normal;clip-path:inset(0 0 0 50%);">79</div>
<div class="a" style="left:1136.20px;top:520.86px;font-size:10.8px;color:#2f2f2f;font-weight:normal;clip-path:inset(0 0 62% 0);">0</div>
<div class="a" style="left:202.2px;top:545.20px;width:982.6px;height:31px;background:#fff;border:1px solid #d5cacd;border-radius:8px"></div><div class="a" style="left:210.5px;top:556.00px;width:10.6px;height:10.6px;box-shadow:inset 0 0 0 1.4px #5c3c46"></div><div class="a" style="left:236.80px;top:558.82px;font-size:8.6px;color:#2f2f2f;font-weight:normal;transform:scaleX(0.87);transform-origin:0 0;">THE_PHOENI</div>
<div class="a" style="left:236.80px;top:568.82px;font-size:8.6px;color:#2f2f2f;font-weight:normal;transform:scaleX(0.87);transform-origin:0 0;">X</div>
<div class="a" style="left:317.50px;top:559.97px;font-size:9.6px;color:#2f2f2f;font-weight:normal;transform:scaleX(0.98);transform-origin:0 0;">HP EliteBook 840 G3</div>
<div class="a" style="left:452.00px;top:555.23px;font-size:10.6px;color:#2f2f2f;font-weight:normal;transform:scaleX(0.89);transform-origin:0 0;">SSD</div>
<div class="a" style="left:573.80px;top:555.23px;font-size:10.6px;color:#2f2f2f;font-weight:normal;transform:scaleX(0.98);transform-origin:0 0;">HP</div>
<div class="a" style="left:692.00px;top:557.06px;font-size:10.8px;color:#2f2f2f;font-weight:normal;">99</div>
<div class="a" style="left:795.60px;top:551.89px;font-size:8.4px;color:#2f2f2f;font-weight:normal;">10.0.22621.819.amd64fre.n</div>
<div class="a" style="left:795.60px;top:561.19px;font-size:8.4px;color:#2f2f2f;font-weight:normal;">i<span style="margin-left:4.2px"></span>release.220506-1250</div>
<div class="a" style="left:956.70px;top:557.26px;font-size:10.8px;color:#2f2f2f;font-weight:normal;">13</div>
<div class="a" style="left:1034.70px;top:556.96px;font-size:10.8px;color:#2f2f2f;font-weight:normal;">13</div>
<div class="a" style="left:1129.70px;top:556.06px;font-size:10.8px;color:#2f2f2f;font-weight:normal;">4</div>
<div class="a" style="left:202.2px;top:580.40px;width:982.6px;height:31px;background:#fff;border:1px solid #d5cacd;border-radius:8px"></div><div class="a" style="left:210.5px;top:591.20px;width:10.6px;height:10.6px;box-shadow:inset 0 0 0 1.4px #5c3c46"></div><div class="a" style="left:236.80px;top:598.12px;font-size:8.6px;color:#2f2f2f;font-weight:normal;transform:scaleX(0.87);transform-origin:0 0;">RIS-SOE-008</div>
<div class="a" style="left:317.50px;top:595.17px;font-size:9.6px;color:#2f2f2f;font-weight:normal;transform:scaleX(0.98);transform-origin:0 0;">HP Laptop 15-dw3xxx</div>
<div class="a" style="left:452.00px;top:590.43px;font-size:10.6px;color:#2f2f2f;font-weight:normal;transform:scaleX(1.06);transform-origin:0 0;">HDD</div>
<div class="a" style="left:573.80px;top:590.43px;font-size:10.6px;color:#2f2f2f;font-weight:normal;transform:scaleX(0.98);transform-origin:0 0;">HP</div>
<div class="a" style="left:692.00px;top:592.26px;font-size:10.8px;color:#2f2f2f;font-weight:normal;">60</div>
<div class="a" style="left:795.60px;top:587.09px;font-size:8.4px;color:#2f2f2f;font-weight:normal;">10.0.19045.2251.amd64fre.</div>
<div class="a" style="left:795.60px;top:596.39px;font-size:8.4px;color:#2f2f2f;font-weight:normal;">vb<span style="margin-left:4.2px"></span>release.191206-1406</div>
<div class="a" style="left:956.70px;top:592.46px;font-size:10.8px;color:#2f2f2f;font-weight:normal;">85</div>
<div class="a" style="left:1034.70px;top:592.16px;font-size:10.8px;color:#2f2f2f;font-weight:normal;">0</div>
<div class="a" style="left:1129.70px;top:591.26px;font-size:10.8px;color:#2f2f2f;font-weight:normal;">3</div>
<div class="a" style="left:202.2px;top:615.60px;width:982.6px;height:31px;background:#fff;border:1px solid #d5cacd;border-radius:8px"></div><div class="a" style="left:210.5px;top:626.40px;width:10.6px;height:10.6px;box-shadow:inset 0 0 0 1.4px #5c3c46"></div><div class="a" style="left:236.80px;top:633.32px;font-size:8.6px;color:#2f2f2f;font-weight:normal;transform:scaleX(0.87);transform-origin:0 0;">RIS-SOE-005</div>
<div class="a" style="left:317.50px;top:630.37px;font-size:9.6px;color:#2f2f2f;font-weight:normal;transform:scaleX(0.98);transform-origin:0 0;">HP Laptop 15-da2xxx</div>
<div class="a" style="left:452.00px;top:625.63px;font-size:10.6px;color:#2f2f2f;font-weight:normal;transform:scaleX(1.06);transform-origin:0 0;">HDD</div>
<div class="a" style="left:573.80px;top:625.63px;font-size:10.6px;color:#2f2f2f;font-weight:normal;transform:scaleX(0.98);transform-origin:0 0;">HP</div>
<div class="a" style="left:692.00px;top:627.46px;font-size:10.8px;color:#2f2f2f;font-weight:normal;">53</div>
<div class="a" style="left:795.60px;top:622.29px;font-size:8.4px;color:#2f2f2f;font-weight:normal;">10.0.19044.1645.amd64fre.</div>
<div class="a" style="left:795.60px;top:631.59px;font-size:8.4px;color:#2f2f2f;font-weight:normal;">vb<span style="margin-left:4.2px"></span>release.191206-1406</div>
<div class="a" style="left:956.70px;top:627.66px;font-size:10.8px;color:#2f2f2f;font-weight:normal;">109</div>
<div class="a" style="left:1034.70px;top:627.36px;font-size:10.8px;color:#2f2f2f;font-weight:normal;">0</div>
<div class="a" style="left:1129.70px;top:626.46px;font-size:10.8px;color:#2f2f2f;font-weight:normal;">17</div>
<div class="a" style="left:202.2px;top:650.80px;width:982.6px;height:31px;background:#fff;border:1px solid #d5cacd;border-radius:8px"></div><div class="a" style="left:210.5px;top:661.60px;width:10.6px;height:10.6px;box-shadow:inset 0 0 0 1.4px #5c3c46"></div><div class="a" style="left:236.80px;top:668.52px;font-size:8.6px;color:#2f2f2f;font-weight:normal;transform:scaleX(0.87);transform-origin:0 0;">RIS-SOE-002</div>
<div class="a" style="left:317.50px;top:665.57px;font-size:9.6px;color:#2f2f2f;font-weight:normal;transform:scaleX(0.98);transform-origin:0 0;">HP Laptop 14-cf3xxx</div>
<div class="a" style="left:452.00px;top:660.83px;font-size:10.6px;color:#2f2f2f;font-weight:normal;transform:scaleX(1.06);transform-origin:0 0;">HDD</div>
<div class="a" style="left:573.80px;top:660.83px;font-size:10.6px;color:#2f2f2f;font-weight:normal;transform:scaleX(0.98);transform-origin:0 0;">HP</div>
<div class="a" style="left:692.00px;top:662.66px;font-size:10.8px;color:#2f2f2f;font-weight:normal;">13</div>
<div class="a" style="left:795.60px;top:657.49px;font-size:8.4px;color:#2f2f2f;font-weight:normal;">10.0.19044.1826.amd64fre.</div>
<div class="a" style="left:795.60px;top:666.79px;font-size:8.4px;color:#2f2f2f;font-weight:normal;">vb<span style="margin-left:4.2px"></span>release.191206-1406</div>
<div class="a" style="left:956.70px;top:662.86px;font-size:10.8px;color:#2f2f2f;font-weight:normal;">91</div>
<div class="a" style="left:1034.70px;top:662.56px;font-size:10.8px;color:#2f2f2f;font-weight:normal;">141</div>
<div class="a" style="left:1129.70px;top:661.66px;font-size:10.8px;color:#2f2f2f;font-weight:normal;">2</div>
</div></body></html>
